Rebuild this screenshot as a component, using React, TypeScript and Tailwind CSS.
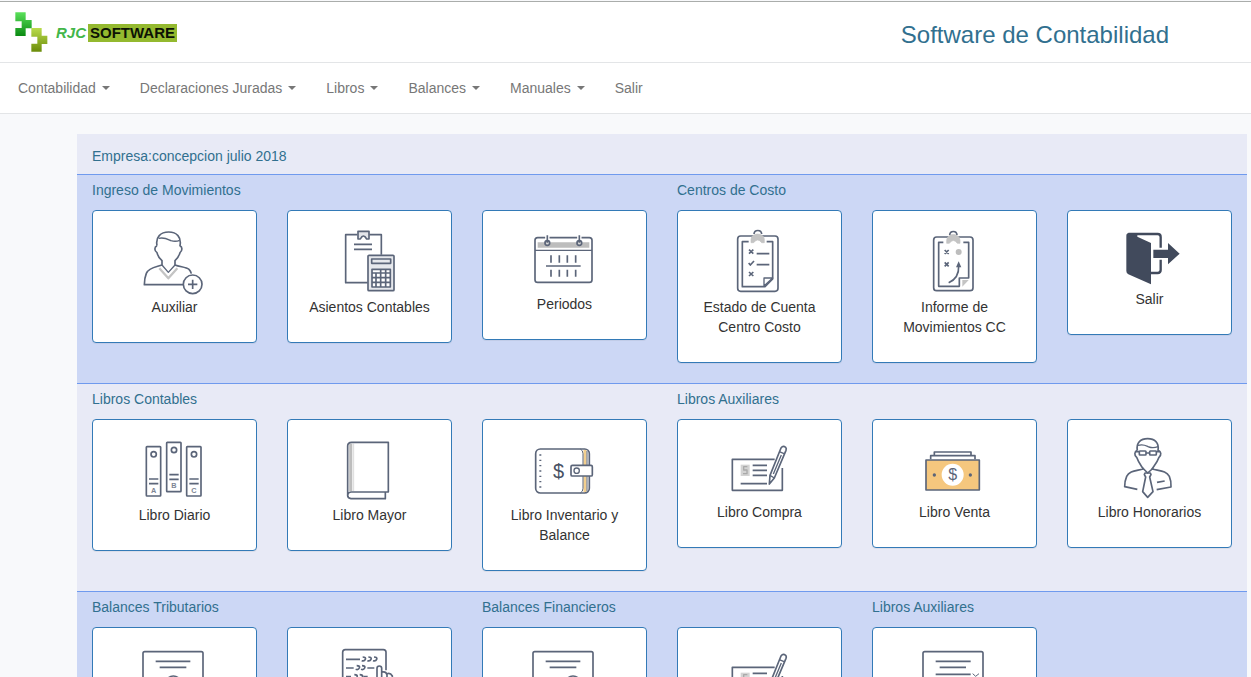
import type { ReactNode } from 'react'

interface CardItem {
  label?: string;
  name: string;
  icon: ReactNode;
}

interface Group {
  title: string;
  span: 2 | 3;
  items: CardItem[];
}

const INK = '#5b6579'

const spanClass = {
  2: 'col-span-2',
  3: 'col-span-3',
}

const colsClass = {
  2: 'grid-cols-2',
  3: 'grid-cols-3',
}

const Drawing = ({ viewBox, size, children }: { viewBox: string; size: string; children: ReactNode }) => (
  <svg
    viewBox={viewBox}
    className={`w-[81px] ${size} block mx-auto`}
    fill="none"
    stroke={INK}
    strokeWidth="5"
    strokeLinejoin="round"
    aria-hidden="true"
  >
    {children}
  </svg>
)

const AuxiliarIcon = () => (
  <Drawing viewBox="162 303 243 213" size="h-[71px]">
    <path d="M238 430L265 460L292 430" stroke="#c4c4c4" strokeWidth="7" />
    <path d="M231 362C226 336 242 321 266 321C290 321 305 336 300 362C308 366 307 378 300 383C296 396 290 403 285 407V420C300 426 318 426 327 433Q332 438 334 446" />
    <path d="M231 362C222 366 223 378 231 383C234 396 241 403 246 407V420C230 426 207 427 199 445Q193 460 193 479H309" />
    <path d="M236 340C254 336 264 343 273 347Q287 351 299 346M246 420L265 442L285 420" strokeWidth="4" />
    <circle cx="338" cy="478" r="28" />
    <path d="M338 464V492M324 478H352" />
  </Drawing>
)

const AsientosIcon = () => (
  <Drawing viewBox="747 303 243 213" size="h-[71px]">
    <path d="M832 329H797V473H863M868 329H904V389" />
    <path d="M834 342V319H867V342H860Q850 324 841 342Z" fill="#e3e5ea" strokeWidth="5" />
    <path d="M822 358H876M822 373H876" />
    <rect x="864" y="391" width="78" height="106" rx="3" fill="#e6e8ec" />
    <rect x="875" y="402" width="57" height="13" strokeWidth="5" />
    <rect x="876" y="433" width="55" height="53" fill="#fff" />
    <path d="M876 444H931M876 458H931M876 472H931M888 444V486M902 433V486M917 433V486" />
  </Drawing>
)

const PeriodosIcon = () => (
  <Drawing viewBox="192 78 243 204" size="h-[68px]">
    <path d="M233 135H388" stroke="#bdbdbd" strokeWidth="16" />
    <rect x="225" y="113" width="171" height="134" rx="8" />
    <path d="M225 151H396" strokeWidth="4" />
    <path d="M262 107V122M358 107V122" stroke="#fff" strokeWidth="13" />
    <circle cx="262" cy="129" r="7" fill="#d8d8d8" />
    <circle cx="358" cy="129" r="7" fill="#d8d8d8" />
    <path d="M262 106V128M358 106V128" />
    <path d="M258 198H362" />
    <path d="M273 166V188M298 166V188M322 166V188M347 166V188M273 209V230M298 209V230M322 209V230M347 209V230" />
  </Drawing>
)

const EstadoIcon = () => (
  <Drawing viewBox="777 78 243 213" size="h-[71px]">
    <rect x="833" y="108" width="121" height="166" rx="9" />
    <path d="M866 125H847V260H915L938 237V125H920" />
    <path d="M912 258V234H938Z" strokeWidth="4" />
    <path d="M873 128V118C874 97 912 97 913 118V128H905Q893 112 881 128Z" fill="#c4c4c4" stroke="#c4c4c4" strokeWidth="2" />
    <path d="M882 102C883 88 904 88 905 102" />
    <path d="M867 149L880 161M880 149L867 161M867 216L880 228M880 216L867 228M866 189L871 195L882 183" />
    <path d="M890 161H928M890 194H928" />
  </Drawing>
)

const InformeIcon = () => (
  <Drawing viewBox="162 78 243 213" size="h-[71px]">
    <rect x="221" y="111" width="118" height="161" rx="9" />
    <path d="M250 127H236V259H298V234H326V127H310" />
    <path d="M307 240H326L307 260Z" fill="#c4c4c4" stroke="none" />
    <path d="M260 130V121C261 98 299 98 300 121V130H292Q280 113 268 130Z" fill="#c4c4c4" stroke="#c4c4c4" strokeWidth="2" />
    <path d="M269 105C270 91 290 91 291 105" />
    <path d="M254 150L266 162M266 150L254 162M254 187L266 199M266 187L254 199" />
    <circle cx="296" cy="156" r="9" fill="#bdbdbd" stroke="none" />
    <path d="M266 248C285 240 297 222 296 198" />
    <path d="M288 202L296 184L304 202Z" fill={INK} stroke="none" />
  </Drawing>
)

const SalirIcon = () => (
  <Drawing viewBox="747 78 243 189" size="h-[63px]">
    <path d="M805 102H893Q902 102 902 111V143M902 179V210Q902 219 893 219H873" stroke="#414a5c" strokeWidth="7" />
    <path d="M799 107Q799 99 807 99H832V110L873 129V253L805 223Q799 220 799 213Z" fill="#414a5c" stroke="none" />
    <path d="M880 149H924V129L959 161L924 193V174H880Z" fill="#414a5c" stroke="none" />
  </Drawing>
)

const binders = [
  { x: 199, y: 215, letter: 'A' },
  { x: 260, y: 202, letter: 'B' },
  { x: 320, y: 215, letter: 'C' },
]

const DiarioIcon = () => (
  <Drawing viewBox="162 180 243 210" size="h-[70px]">
    {binders.map(({ x, y, letter }) => (
      <g key={letter}>
        <rect x={x} y={y} width="43" height="148" rx="2" />
        <circle cx={x + 22} cy={y + 23} r="8" />
        <path d={`M${x + 8} ${y + 97}h28M${x + 8} ${y + 111}h28`} />
        <text
          x={x + 22}
          y={y + 138}
          textAnchor="middle"
          fontSize="22"
          fontWeight="bold"
          fontFamily="Liberation Sans, sans-serif"
          fill="#7d8594"
          stroke="none"
        >
          {letter}
        </text>
      </g>
    ))}
  </Drawing>
)

const MayorIcon = () => (
  <Drawing viewBox="747 180 243 210" size="h-[70px]">
    <path d="M812 206V348" stroke="#bdbdbd" strokeWidth="9" />
    <path d="M820 206V348" stroke="#e0e0e0" strokeWidth="5" />
    <path d="M803 364V213Q803 202 815 202H925V351H813Q803 352 803 361T813 371H916V353" />
  </Drawing>
)

const InventarioIcon = () => (
  <Drawing viewBox="192 180 243 210" size="h-[70px]">
    <path d="M375 224V352" stroke="#f3cf8e" strokeWidth="9" />
    <rect x="227" y="222" width="161" height="132" rx="14" />
    <path d="M361 222Q369 226 369 236V340Q369 350 361 354M381 228V348" strokeWidth="3" />
    <path d="M241 238V340" strokeDasharray="4 12" strokeWidth="6" />
    <text
      x="296"
      y="308"
      textAnchor="middle"
      fontSize="60"
      fontFamily="Liberation Sans, sans-serif"
      fill="#485163"
      stroke="none"
    >
      $
    </text>
    <rect x="333" y="271" width="64" height="32" rx="4" fill="#fff" />
    <circle cx="350" cy="287" r="8" strokeWidth="4" />
  </Drawing>
)

const CompraIcon = () => (
  <Drawing viewBox="777 180 243 201" size="h-[67px]">
    <path d="M944 253H817V346H967V279" />
    <rect x="842" y="269" width="27" height="34" fill="#d3d3d3" stroke="none" />
    <path d="M862 275H851V285H861V296H849" stroke="#a9a9a9" strokeWidth="4" />
    <path d="M878 271H921M878 286H921M878 301H921M842 326H921" />
    <path d="M963 219Q969 211 977 217Q980 220 978 226L943 309L928 327L930 301Z" fill="#fff" />
    <path d="M958 230L972 236M930 301L943 309M964 240L940 297" strokeWidth="4" />
  </Drawing>
)

const VentaIcon = () => (
  <Drawing viewBox="162 180 243 201" size="h-[67px]">
    <path d="M223 241V231H333V241M212 253V242H345V253" />
    <rect x="198" y="255" width="160" height="90" fill="#f5c77e" />
    <circle cx="278" cy="299" r="33" fill="#fff" stroke="none" />
    <circle cx="223" cy="300" r="5" fill={INK} stroke="none" />
    <circle cx="331" cy="300" r="5" fill={INK} stroke="none" />
    <text
      x="278"
      y="316"
      textAnchor="middle"
      fontSize="48"
      fontFamily="Liberation Sans, sans-serif"
      fill={INK}
      stroke="none"
    >
      $
    </text>
  </Drawing>
)

const HonorariosIcon = () => (
  <Drawing viewBox="747 180 243 201" size="h-[67px]">
    <path d="M832 226C828 203 842 191 863 191S898 203 894 226C904 230 905 240 897 247C892 262 884 270 876 282C900 288 919 287 928 304Q934 318 933 336L890 344" />
    <path d="M832 226C823 230 822 240 830 247C835 262 842 270 850 282C828 288 808 287 800 304Q794 318 794 335L832 343" />
    <path d="M834 211C851 206 858 212 867 216Q880 220 894 215" strokeWidth="4" />
    <path d="M828 230H838M858 234H869M889 230H899" />
    <rect x="838" y="228" width="20" height="12" rx="2" />
    <rect x="869" y="228" width="20" height="12" rx="2" />
    <path d="M848 279L863 294L880 279" />
    <path d="M855 294H871L873 299L869 306L879 350L863 367L848 350L857 306L853 299Z" />
    <path d="M891 322L914 318" />
  </Drawing>
)

const CertificateIcon = ({ seal }: { seal: number }) => (
  <Drawing viewBox="0 0 243 210" size="h-[70px]">
    <rect x="27" y="26" width="180" height="126" rx="5" />
    <path d="M65 55H169M77 73H157" />
    <circle cx={seal} cy="122" r="23" fill="#fff" />
    <path d={`M${seal - 14} 142v40l14 -12l14 12v-40`} fill="#fff" />
  </Drawing>
)

const FormIcon = () => (
  <Drawing viewBox="0 0 243 210" size="h-[70px]">
    <rect x="27" y="26" width="180" height="150" rx="5" />
    <path d="M65 55H170M77 73H156M65 94H170M65 112H150" />
    <path d="M176 92L185 100L195 92" strokeWidth="3" />
  </Drawing>
)

const HandFormIcon = () => (
  <Drawing viewBox="0 0 243 210" size="h-[70px]">
    <path d="M171 82V28Q171 20 163 20H49Q41 20 41 28V180H140" />
    <path d="M51 49H93M51 75H74M115 75H136M51 101H66M103 101H116" />
    <path d="M101 42Q112 42 109 49T98 53M118 42Q129 42 126 49T115 53M135 42Q146 42 143 49T132 53" />
    <path d="M83 68Q94 68 91 75T80 79M99 68Q110 68 107 75T96 79M76 95Q87 95 84 102T73 106M92 95Q103 95 100 102T89 106" />
    <path d="M144 130V76Q144 69 151 69T158 76V112M158 88Q170 84 174 95V112M174 92Q184 88 190 99V120" />
  </Drawing>
)

const rows: { name: string; className: string; groups: Group[] }[] = [
  {
    name: 'movimientos',
    className: 'bg-[#ccd7f5]',
    groups: [
      {
        title: 'Ingreso de Movimientos',
        span: 3,
        items: [
          { name: 'auxiliar', label: 'Auxiliar', icon: <AuxiliarIcon /> },
          { name: 'asientos', label: 'Asientos Contables', icon: <AsientosIcon /> },
          { name: 'periodos', label: 'Periodos', icon: <PeriodosIcon /> },
        ],
      },
      {
        title: 'Centros de Costo',
        span: 3,
        items: [
          { name: 'estado', label: 'Estado de Cuenta Centro Costo', icon: <EstadoIcon /> },
          { name: 'informe', label: 'Informe de Movimientos CC', icon: <InformeIcon /> },
          { name: 'salir', label: 'Salir', icon: <SalirIcon /> },
        ],
      },
    ],
  },
  {
    name: 'libros',
    className: 'bg-[#e8eaf6]',
    groups: [
      {
        title: 'Libros Contables',
        span: 3,
        items: [
          { name: 'diario', label: 'Libro Diario', icon: <DiarioIcon /> },
          { name: 'mayor', label: 'Libro Mayor', icon: <MayorIcon /> },
          { name: 'inventario', label: 'Libro Inventario y Balance', icon: <InventarioIcon /> },
        ],
      },
      {
        title: 'Libros Auxiliares',
        span: 3,
        items: [
          { name: 'compra', label: 'Libro Compra', icon: <CompraIcon /> },
          { name: 'venta', label: 'Libro Venta', icon: <VentaIcon /> },
          { name: 'honorarios', label: 'Libro Honorarios', icon: <HonorariosIcon /> },
        ],
      },
    ],
  },
  {
    name: 'balances',
    className: 'bg-[#ccd7f5]',
    groups: [
      {
        title: 'Balances Tributarios',
        span: 2,
        items: [
          { name: 'tributario-1', icon: <CertificateIcon seal={118} /> },
          { name: 'tributario-2', icon: <HandFormIcon /> },
        ],
      },
      {
        title: 'Balances Financieros',
        span: 2,
        items: [
          { name: 'financiero-1', icon: <CertificateIcon seal={147} /> },
          { name: 'financiero-2', icon: <CompraIcon /> },
        ],
      },
      {
        title: 'Libros Auxiliares',
        span: 2,
        items: [{ name: 'auxiliar-1', icon: <FormIcon /> }],
      },
    ],
  },
]

const menus = ['Contabilidad', 'Declaraciones Juradas', 'Libros', 'Balances', 'Manuales']

const Logo = () => (
  <a href="#" className="flex items-center gap-2">
    <svg viewBox="45 36 99 120" className="w-[33px] h-10" aria-hidden="true">
      <defs>
        <linearGradient id="green" x1="0" y1="0" x2="0" y2="1">
          <stop offset="0" stopColor="#5ae05a" />
          <stop offset="1" stopColor="#0a8a12" />
        </linearGradient>
        <linearGradient id="olive" x1="0" y1="0" x2="0" y2="1">
          <stop offset="0" stopColor="#b9dc4c" />
          <stop offset="1" stopColor="#6b8c0a" />
        </linearGradient>
      </defs>
      <path d="M46 37H77V60H95V85H77V108H46V84H65V64H46Z" fill="url(#green)" />
      <path d="M94 84H125V107H142V132H125V155H94V131H112V110H94Z" fill="url(#olive)" />
    </svg>
    <span className="flex items-center pt-0.5 text-[15px] leading-[18px] font-bold">
      <span className="italic text-[#43b649] mr-0.5">RJC</span>
      <span className="bg-[#94b92f] text-[#0c1204] px-0.5">SOFTWARE</span>
    </span>
  </a>
)

const Card = ({ item }: { item: CardItem }) => (
  <a
    href="#"
    aria-label={item.label ? undefined : item.name}
    className="block rounded-sm border border-[#337ab7] bg-white p-[15px] text-center text-[#333] shadow-2xs"
  >
    {item.icon}
    {item.label && <p className="mb-2.5">{item.label}</p>}
  </a>
)

export default function App() {
  return (
    <div className="h-screen overflow-hidden bg-[#f8f9fb] font-['Liberation_Sans',Arial,sans-serif] text-sm leading-5">
      <header className="bg-white">
        <div className="mt-px flex items-center justify-between border-t border-[#aaadab] border-b border-b-[#e3e5e7] py-2.5 pl-[15px] pr-[82px]">
          <Logo />
          <h1 className="pt-1.5 text-2xl leading-8 text-[#31708f]">Software de Contabilidad</h1>
        </div>
        <nav className="flex border-b border-[#e3e5e7] pl-[3px] text-[#777]">
          {menus.map((menu) => (
            <button key={menu} type="button" className="flex items-center gap-1.5 p-[15px]">
              {menu}
              <span className="border-x-4 border-t-4 border-x-transparent border-t-[#777]" />
            </button>
          ))}
          <a href="#" className="p-[15px]">Salir</a>
        </nav>
      </header>
      <main className="mt-5 ml-[77px] mr-1 text-[#31708f]">
        <div className="border-b border-[#6f9aee] bg-[#e8eaf6] px-[15px] pt-3 pb-2">
          Empresa:concepcion julio 2018
        </div>
        {rows.map((row) => (
          <section key={row.name} className={`grid grid-cols-6 border-b border-[#6f9aee] pt-[5px] pb-5 ${row.className}`}>
            {row.groups.map((group) => (
              <div key={group.title} className={`px-[15px] ${spanClass[group.span]}`}>
                <h2 className="mb-2.5">{group.title}</h2>
                <div className={`grid items-start gap-[30px] ${colsClass[group.span]}`}>
                  {group.items.map((item) => (
                    <Card key={item.name} item={item} />
                  ))}
                </div>
              </div>
            ))}
          </section>
        ))}
      </main>
    </div>
  )
}
